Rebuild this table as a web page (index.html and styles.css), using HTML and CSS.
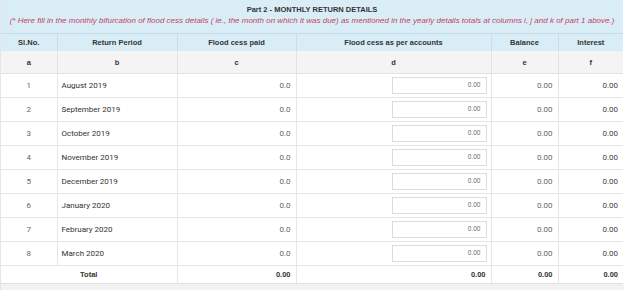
FILE: index.html
```html
<!DOCTYPE html>
<html>
<head>
<meta charset="utf-8">
<link rel="stylesheet" href="styles.css">
</head>
<body>
<div class="panel">
<table class="grid">
  <colgroup>
    <col class="c-sl"><col class="c-period"><col class="c-paid"><col class="c-acc"><col class="c-bal"><col class="c-int">
  </colgroup>
  <thead>
    <tr class="title-row"><th colspan="6">Part 2 - MONTHLY RETURN DETAILS</th></tr>
    <tr class="note-row"><th colspan="6">(* Here fill in the monthly bifurcation of flood cess details ( ie., the month on which it was due) as mentioned in the yearly details totals at columns i, j and k of part 1 above.)</th></tr>
    <tr class="head-row">
      <th>Sl.No.</th><th>Return Period</th><th>Flood cess paid</th><th>Flood cess as per accounts</th><th>Balance</th><th>Interest</th>
    </tr>
  </thead>
  <tbody>
    <tr class="letter-row"><td>a</td><td>b</td><td>c</td><td>d</td><td>e</td><td>f</td></tr>
    <tr class="data-row"><td class="sl">1</td><td class="period">August 2019</td><td class="num muted">0.0</td><td class="inp"><span class="box">0.00</span></td><td class="num muted">0.00</td><td class="num">0.00</td></tr>
    <tr class="data-row"><td class="sl">2</td><td class="period">September 2019</td><td class="num muted">0.0</td><td class="inp"><span class="box">0.00</span></td><td class="num muted">0.00</td><td class="num">0.00</td></tr>
    <tr class="data-row"><td class="sl">3</td><td class="period">October 2019</td><td class="num muted">0.0</td><td class="inp"><span class="box">0.00</span></td><td class="num muted">0.00</td><td class="num">0.00</td></tr>
    <tr class="data-row"><td class="sl">4</td><td class="period">November 2019</td><td class="num muted">0.0</td><td class="inp"><span class="box">0.00</span></td><td class="num muted">0.00</td><td class="num">0.00</td></tr>
    <tr class="data-row"><td class="sl">5</td><td class="period">December 2019</td><td class="num muted">0.0</td><td class="inp"><span class="box">0.00</span></td><td class="num muted">0.00</td><td class="num">0.00</td></tr>
    <tr class="data-row"><td class="sl">6</td><td class="period">January 2020</td><td class="num muted">0.0</td><td class="inp"><span class="box">0.00</span></td><td class="num muted">0.00</td><td class="num">0.00</td></tr>
    <tr class="data-row"><td class="sl">7</td><td class="period">February 2020</td><td class="num muted">0.0</td><td class="inp"><span class="box">0.00</span></td><td class="num muted">0.00</td><td class="num">0.00</td></tr>
    <tr class="data-row"><td class="sl">8</td><td class="period">March 2020</td><td class="num muted">0.0</td><td class="inp"><span class="box">0.00</span></td><td class="num muted">0.00</td><td class="num">0.00</td></tr>
    <tr class="total-row"><td colspan="2" class="total-label">Total</td><td class="num">0.00</td><td class="num">0.00</td><td class="num">0.00</td><td class="num">0.00</td></tr>
  </tbody>
</table>
<div class="footer-bar"></div>
</div>
</body>
</html>
```
FILE: styles.css
```css
html, body {
  margin: 0;
  padding: 0;
  background: #ffffff;
}
body {
  width: 625px;
  height: 290px;
  overflow: hidden;
  font-family: Roboto, "Liberation Sans", sans-serif;
  color: #333333;
}
.panel {
  width: 623px;
  border-left: 1px solid #e6e6e6;
}
.grid {
  width: 622px;
  border-collapse: collapse;
  table-layout: fixed;
}
.c-sl { width: 56px; }
.c-period { width: 120px; }
.c-paid { width: 119px; }
.c-acc { width: 195px; }
.c-bal { width: 67px; }
.c-int { width: 65px; }

.grid th, .grid td {
  padding: 0;
  box-sizing: border-box;
}

.title-row th {
  background: #d9edf7;
  font-family: "Liberation Sans", Arial, sans-serif;
  font-weight: bold;
  font-size: 7.5px;
  line-height: 8px;
  height: 14px;
  padding-top: 6px;
  color: #333;
  text-align: center;
}
.note-row th {
  background: #d9edf7;
  font-family: "Liberation Sans", Arial, sans-serif;
  font-weight: normal;
  font-style: italic;
  font-size: 8px;
  line-height: 9px;
  height: 19px;
  padding-top: 2px;
  padding-bottom: 8px;
  vertical-align: top;
  color: #c4425f;
  text-align: center;
  white-space: nowrap;
}
.head-row th {
  background: #d9edf7;
  border-top: 1px solid #c4dcea;
  border-left: 1px solid #c9dfea;
  font-family: "Liberation Sans", Arial, sans-serif;
  font-weight: bold;
  font-size: 7.5px;
  height: 17px;
  color: #333;
  text-align: center;
}
.head-row th:first-child { border-left: none; }

.letter-row td {
  background: #f4f4f4;
  border-left: 1px solid #e2e2e2;
  border-bottom: 1px solid #e2e2e2;
  font-family: "Liberation Sans", Arial, sans-serif;
  font-weight: bold;
  font-size: 7.5px;
  height: 23px;
  padding-top: 2px;
  text-align: center;
  color: #333;
}
.letter-row td:first-child { border-left: none; }

.data-row td {
  background: #ffffff;
  border-left: 1px solid #e6e6e6;
  border-bottom: 1px solid #e6e6e6;
  height: 24px;
  font-size: 8px;
  vertical-align: middle;
}
.data-row td:first-child { border-left: none; }
.sl { text-align: center; color: #666; }
.period { padding-left: 4px !important; color: #333; }
.num { text-align: right; padding-right: 5px !important; color: #444; }
.muted { color: #666; }
.inp { text-align: right; }
.box {
  display: inline-block;
  box-sizing: border-box;
  width: 95px;
  height: 17px;
  margin-right: 4px;
  border: 1px solid #dcdcdc;
  font-size: 6.5px;
  line-height: 15px;
  text-align: right;
  padding-right: 5px;
  color: #777;
  vertical-align: middle;
}

.total-row td {
  border-left: 1px solid #e6e6e6;
  border-bottom: 1px solid #e0e0e0;
  height: 18px;
  font-family: "Liberation Sans", Arial, sans-serif;
  font-weight: bold;
  font-size: 7.5px;
  color: #333;
}
.total-row td:first-child { border-left: none; }
.total-label { text-align: center; }

.footer-bar {
  height: 8px;
  background: #f2f2f2;
}
```
